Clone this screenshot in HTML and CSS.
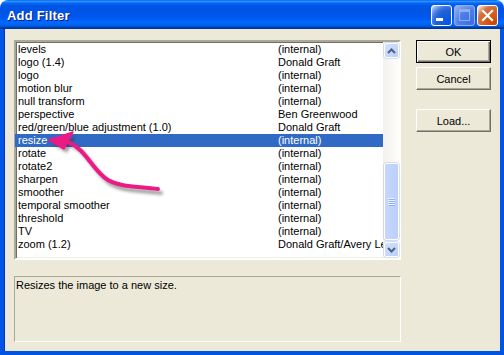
FILE: index.html
```html
<!DOCTYPE html>
<html>
<head>
<meta charset="utf-8">
<link rel="stylesheet" href="styles.css">
</head>
<body>
<div class="window">
  <div class="titlebar">
    <span class="title">Add Filter</span>
    <div class="tbtns">
      <span class="tb min"><span class="min-bar"></span></span>
      <span class="tb max"><span class="max-box"></span></span>
      <span class="tb close">
        <svg width="13" height="13" viewBox="0 0 13 13"><path d="M2 2 L11 11 M11 2 L2 11" stroke="#fff" stroke-width="2.2" stroke-linecap="square"/></svg>
      </span>
    </div>
  </div>
  <div class="client">
    <div class="main">
      <div class="list">
        <div class="rows">
          <div class="row"><span>levels</span><span>(internal)</span></div>
          <div class="row"><span>logo (1.4)</span><span>Donald Graft</span></div>
          <div class="row"><span>logo</span><span>(internal)</span></div>
          <div class="row"><span>motion blur</span><span>(internal)</span></div>
          <div class="row"><span>null transform</span><span>(internal)</span></div>
          <div class="row"><span>perspective</span><span>Ben Greenwood</span></div>
          <div class="row"><span>red/green/blue adjustment (1.0)</span><span>Donald Graft</span></div>
          <div class="row selected"><span>resize</span><span>(internal)</span></div>
          <div class="row"><span>rotate</span><span>(internal)</span></div>
          <div class="row"><span>rotate2</span><span>(internal)</span></div>
          <div class="row"><span>sharpen</span><span>(internal)</span></div>
          <div class="row"><span>smoother</span><span>(internal)</span></div>
          <div class="row"><span>temporal smoother</span><span>(internal)</span></div>
          <div class="row"><span>threshold</span><span>(internal)</span></div>
          <div class="row"><span>TV</span><span>(internal)</span></div>
          <div class="row"><span>zoom (1.2)</span><span>Donald Graft/Avery Lee</span></div>
        </div>
        <div class="scrollbar">
          <div class="sbtn">
            <svg width="9" height="6" viewBox="0 0 9 6"><path d="M1 5 L4.5 1.5 L8 5" fill="none" stroke="#4D6185" stroke-width="2"/></svg>
          </div>
          <div class="track">
            <div class="thumb">
              <svg width="7" height="8" viewBox="0 0 7 8"><path d="M0 0.5h7M0 2.5h7M0 4.5h7M0 6.5h7" stroke="#EEF4FE" stroke-width="1"/><path d="M1 1.5h7M1 3.5h7M1 5.5h7M1 7.5h7" stroke="#8CB0F8" stroke-width="1"/></svg>
            </div>
          </div>
          <div class="sbtn">
            <svg width="9" height="6" viewBox="0 0 9 6"><path d="M1 1 L4.5 4.5 L8 1" fill="none" stroke="#4D6185" stroke-width="2"/></svg>
          </div>
        </div>
      </div>
      <div class="desc">Resizes the image to a new size.</div>
    </div>
    <div class="buttons">
      <div class="btn default">OK</div>
      <div class="btn">Cancel</div>
      <div class="btn load">Load...</div>
    </div>
  </div>
  <svg class="arrow" width="504" height="355" viewBox="0 0 504 355">
    <defs>
      <filter id="sh" x="-20%" y="-20%" width="140%" height="140%">
        <feGaussianBlur stdDeviation="1.5"/>
      </filter>
    </defs>
    <g transform="translate(3,4)" opacity="0.45" filter="url(#sh)">
      <path d="M70 142 C86 149 92 170 108 180 C122 188 140 186 158 189" fill="none" stroke="#333" stroke-width="4" stroke-linecap="round"/>
      <path d="M49 140 L73 132 L64 149 Z" fill="#333"/>
    </g>
    <path d="M68 142 C86 149 92 170 108 180 C122 188 140 186 158 189" fill="none" stroke="#EC1A84" stroke-width="4" stroke-linecap="round"/>
    <path d="M49 140 L73 132 L64 149 Z" fill="#EC1A84" stroke="#EC1A84" stroke-width="1.5" stroke-linejoin="round"/>
  </svg>
</div>
</body>
</html>
```
FILE: styles.css
```css
html, body {
  margin: 0;
  padding: 0;
  background: #ffffff;
}
.window {
  position: relative;
  width: 504px;
  height: 355px;
  display: flex;
  flex-direction: column;
  font-family: "Liberation Sans", Arial, sans-serif;
  font-size: 11px;
  color: #000;
}
.titlebar {
  height: 29px;
  flex: none;
  border-radius: 8px 8px 0 0;
  background: linear-gradient(to bottom, #0058EE 0%, #3593FF 4%, #288EFF 6%, #127DFF 8%, #036FFC 10%, #0262EE 14%, #0057E5 20%, #0054E3 24%, #0055EB 56%, #005BF5 66%, #026AFE 76%, #0062EF 86%, #0052D6 92%, #0040AB 94%, #003092 100%);
  display: flex;
  align-items: center;
  justify-content: space-between;
  padding: 0 6px 0 7px;
}
.title {
  color: #fff;
  font-weight: bold;
  font-size: 13px;
  letter-spacing: 0.2px;
  text-shadow: 1px 1px #0A1883;
  margin-top: 2px;
}
.tbtns {
  display: flex;
  gap: 2px;
  margin-top: 1px;
}
.tb {
  width: 19px;
  height: 19px;
  border: 1px solid #fff;
  border-radius: 3px;
  display: flex;
  align-items: center;
  justify-content: center;
  box-sizing: content-box;
}
.min {
  background: radial-gradient(circle at 90% 90%, #0054E9 0%, #2263D5 55%, #4479E4 70%, #A3BBEC 90%, #fff 100%);
  align-items: flex-end;
}
.min-bar {
  width: 7px;
  height: 3px;
  background: #fff;
  margin-bottom: 4px;
  margin-right: 4px;
}
.max {
  background: radial-gradient(circle at 90% 90%, #3D6FE6 0%, #4C7FEA 55%, #6A94EE 70%, #9FB8F2 100%);
  border-color: #8FAEF2;
}
.max-box {
  width: 9px;
  height: 8px;
  border: 1px solid #8FAEF2;
  border-top-width: 3px;
}
.close {
  background: radial-gradient(circle at 90% 90%, #CC4600 0%, #DC6527 55%, #CD7546 70%, #FFCCB2 90%, #fff 100%);
}
.client {
  flex: 1;
  background: #ECE9D8;
  border: solid #0054E3;
  border-width: 0 4px 4px 4px;
  box-shadow: inset 1px 0 #0831D9;
  display: flex;
  padding: 11px 0 0 10px;
  gap: 15px;
}
.main {
  width: 387px;
  display: flex;
  flex-direction: column;
  gap: 16px;
}
.list {
  height: 216px;
  border: 2px solid;
  border-color: #ACA899 #fff #fff #ACA899;
  box-shadow: inset 1px 1px #716F64, inset -1px -1px #F1EFE2;
  background: #fff;
  display: flex;
}
.rows {
  flex: 1;
  padding-top: 1px;
  overflow: hidden;
  margin-left: -1px;
}
.row {
  display: grid;
  grid-template-columns: 260px 1fr;
  height: 13px;
  line-height: 13px;
  padding-left: 3px;
  white-space: nowrap;
  overflow: hidden;
}
.row span {
  overflow: hidden;
}
.row.selected {
  background: #316AC5;
  color: #fff;
}
.scrollbar {
  width: 17px;
  display: flex;
  flex-direction: column;
  background: linear-gradient(to right, #F3F1EC, #FEFEFB);
  margin-right: -1px;
}
.sbtn {
  height: 15px;
  margin: 1px 1px 1px 1px;
  border: 1px solid #fff;
  border-radius: 2px;
  background: linear-gradient(135deg, #D5E1FC, #B9CEFA);
  box-shadow: 0 0 0 0.5px #B0C5F3;
  display: flex;
  align-items: center;
  justify-content: center;
  box-sizing: border-box;
}
.track {
  flex: 1;
  display: flex;
  flex-direction: column;
}
.thumb {
  margin: 104px 1px 1px 1px;
  flex: 1;
  border: 1px solid #fff;
  border-radius: 2px;
  background: linear-gradient(to right, #C7D7FC, #BACFFB);
  box-shadow: 0 0 0 0.5px #A9C0F2;
  display: flex;
  align-items: center;
  justify-content: center;
}
.desc {
  height: 62px;
  border: 1px solid;
  border-color: #ACA899 #fff #fff #ACA899;
  padding: 1px 1px;
  line-height: 14px;
}
.buttons {
  display: flex;
  flex-direction: column;
  width: 75px;
  gap: 4px;
}
.btn {
  height: 23px;
  box-sizing: border-box;
  display: flex;
  align-items: center;
  justify-content: center;
  background: #ECE9D8;
  border: 1px solid;
  border-color: #fff #716F64 #716F64 #fff;
  box-shadow: inset -1px -1px #ACA899;
  font-size: 11px;
}
.btn.default {
  border: 1px solid #000;
  box-shadow: inset 1px 1px #fff, inset -1px -1px #716F64, inset -2px -2px #ACA899;
}
.btn.load {
  margin-top: 15px;
}
.arrow {
  position: absolute;
  left: 0;
  top: 0;
  pointer-events: none;
}
```
